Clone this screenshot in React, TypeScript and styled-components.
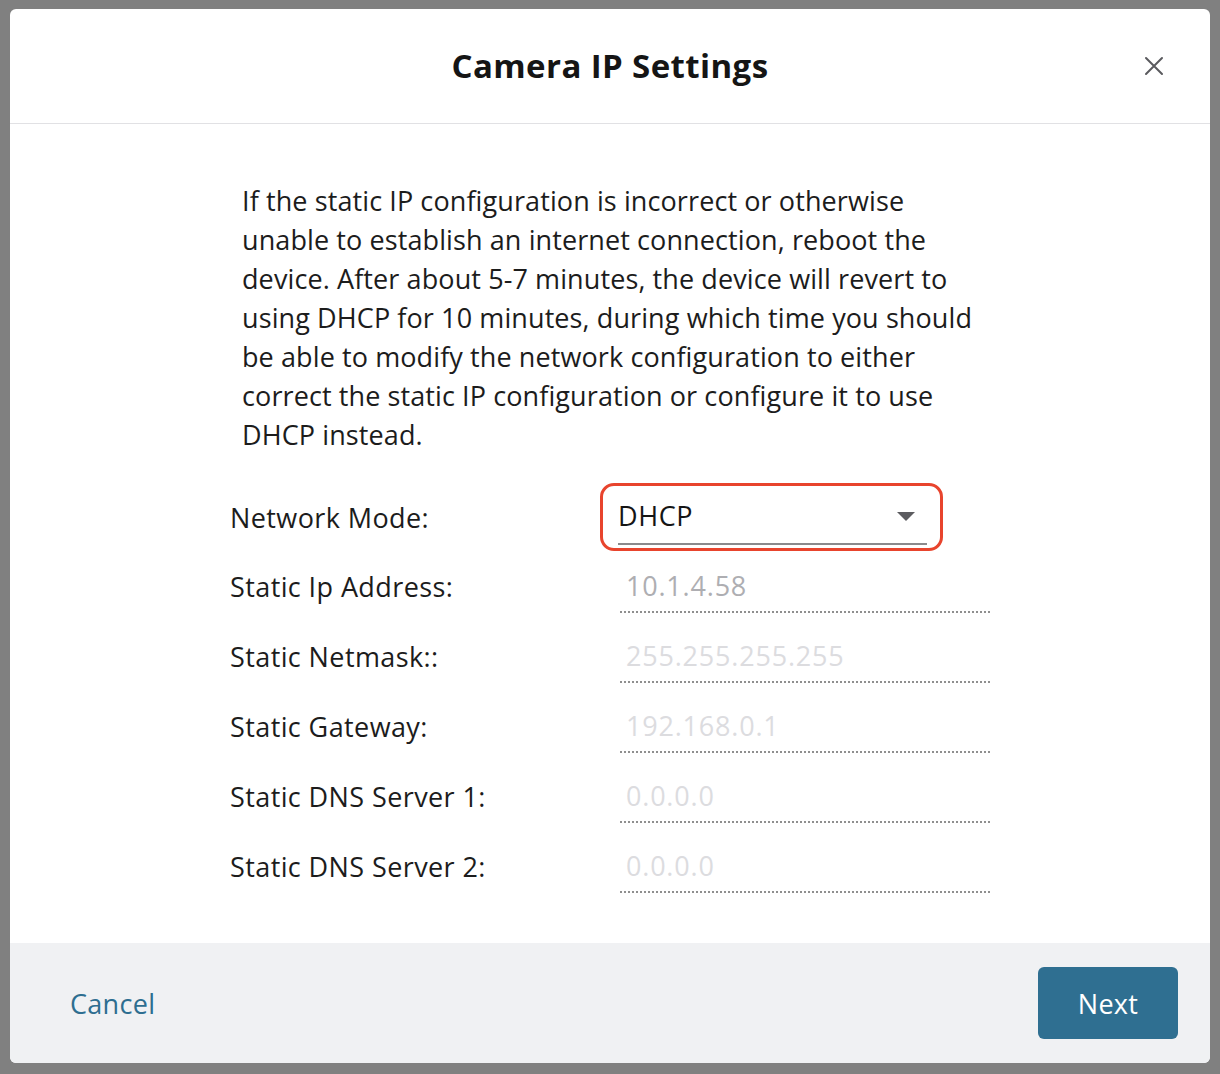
import styled, { createGlobalStyle } from 'styled-components';

const GlobalStyle = createGlobalStyle`
  html, body {
    margin: 0;
    padding: 0;
    background: #808080;
  }
  body {
    font-family: "Open Sans", "Noto Sans", "Liberation Sans", sans-serif;
    color: #1c1c1c;
  }
  * {
    box-sizing: border-box;
  }
`;

const Backdrop = styled.div`
  width: 1220px;
  height: 1074px;
  padding: 9px 10px 11px 10px;
`;

const Dialog = styled.div`
  width: 1200px;
  height: 1054px;
  background: #fff;
  border-radius: 6px;
  overflow: hidden;
  display: flex;
  flex-direction: column;
`;

const Header = styled.div`
  height: 115px;
  flex-shrink: 0;
  display: flex;
  align-items: center;
  justify-content: center;
  position: relative;
  border-bottom: 1px solid #e1e1e4;
`;

const Title = styled.h1`
  margin: 0 0 2px;
  font-size: 33px;
  font-weight: 700;
  letter-spacing: 0.4px;
  color: #151515;
`;

const CloseButton = styled.button`
  position: absolute;
  right: 44px;
  top: 45px;
  width: 24px;
  height: 24px;
  padding: 0;
  border: none;
  background: transparent;
  display: flex;
  align-items: center;
  justify-content: center;
  cursor: pointer;
`;

const Body = styled.div`
  flex: 1;
  padding: 57px 0 0 220px;
`;

const Description = styled.p`
  margin: 0 0 29px 12px;
  width: 760px;
  font-size: 27px;
  letter-spacing: 0.1px;
  line-height: 39px;
  color: #1c1c1c;
`;

const Line = styled.span`
  display: block;
  white-space: nowrap;
`;

const FormRow = styled.div<{ $tall?: boolean }>`
  display: grid;
  grid-template-columns: 370px 1fr;
  height: ${p => (p.$tall ? '68px' : '70px')};
  align-items: center;
`;

const Label = styled.label`
  font-size: 27px;
  letter-spacing: 0.4px;
  color: #1c1c1c;
`;

const SelectBox = styled.div`
  width: 343px;
  height: 68px;
  border: 3px solid #e8442d;
  border-radius: 14px;
  padding: 0 13px 0 15px;
  display: flex;
  flex-direction: column;
  justify-content: flex-start;
`;

const SelectInner = styled.div`
  margin-top: 8px;
  height: 51px;
  border-bottom: 2px solid #8a8a8c;
  display: flex;
  align-items: center;
  justify-content: space-between;
  padding: 0 12px 7px 0;
  font-size: 27px;
  letter-spacing: 0.6px;
  color: #151515;
`;

const Caret = styled.span`
  width: 0;
  height: 0;
  border-left: 9px solid transparent;
  border-right: 9px solid transparent;
  border-top: 9px solid #5c5c60;
  margin-top: 2px;
`;

const Field = styled.div<{ $muted?: boolean }>`
  align-self: start;
  margin-top: 10px;
  margin-left: 20px;
  width: 370px;
  height: 52px;
  border-bottom: 2px dotted #8f8f8f;
  padding-left: 6px;
  line-height: 50px;
  font-size: 27px;
  letter-spacing: 0.8px;
  color: ${p => (p.$muted ? '#dcdcdf' : '#aeaeb2')};
`;

const Footer = styled.div`
  height: 120px;
  flex-shrink: 0;
  background: #f0f1f3;
  display: flex;
  align-items: center;
  justify-content: space-between;
  padding: 0 32px 0 60px;
`;

const TextButton = styled.button`
  border: none;
  background: transparent;
  padding: 0;
  font-family: inherit;
  font-size: 27px;
  letter-spacing: 0.3px;
  color: #2e6e90;
  cursor: pointer;
`;

const PrimaryButton = styled.button`
  width: 140px;
  height: 72px;
  border: none;
  border-radius: 6px;
  background: #2f6f91;
  color: #fff;
  font-family: inherit;
  font-size: 27px;
  letter-spacing: 0.3px;
  cursor: pointer;
`;

const descriptionLines = [
    'If the static IP configuration is incorrect or otherwise',
    'unable to establish an internet connection, reboot the',
    'device. After about 5-7 minutes, the device will revert to',
    'using DHCP for 10 minutes, during which time you should',
    'be able to modify the network configuration to either',
    'correct the static IP configuration or configure it to use',
    'DHCP instead.',
];

const staticFields = [
    { label: 'Static Ip Address:', value: '10.1.4.58', muted: false },
    { label: 'Static Netmask::', value: '255.255.255.255', muted: true },
    { label: 'Static Gateway:', value: '192.168.0.1', muted: true },
    { label: 'Static DNS Server 1:', value: '0.0.0.0', muted: true },
    { label: 'Static DNS Server 2:', value: '0.0.0.0', muted: true },
];

const App = () => {
    return (
        <>
            <GlobalStyle />
            <Backdrop>
                <Dialog>
                    <Header>
                        <Title>Camera IP Settings</Title>
                        <CloseButton aria-label="Close">
                            <svg width="20" height="20" viewBox="0 0 20 20">
                                <path d="M2 2 L18 18 M18 2 L2 18" stroke="#5a5a5e" strokeWidth="2" strokeLinecap="round" />
                            </svg>
                        </CloseButton>
                    </Header>

                    <Body>
                        <Description>
                            {descriptionLines.map(line => (
                                <Line key={line}>{line}</Line>
                            ))}
                        </Description>

                        <FormRow $tall>
                            <Label>Network Mode:</Label>
                            <SelectBox>
                                <SelectInner>
                                    DHCP
                                    <Caret />
                                </SelectInner>
                            </SelectBox>
                        </FormRow>

                        {staticFields.map(field => (
                            <FormRow key={field.label}>
                                <Label>{field.label}</Label>
                                <Field $muted={field.muted}>{field.value}</Field>
                            </FormRow>
                        ))}
                    </Body>

                    <Footer>
                        <TextButton>Cancel</TextButton>
                        <PrimaryButton>Next</PrimaryButton>
                    </Footer>
                </Dialog>
            </Backdrop>
        </>
    );
};

export default App;
